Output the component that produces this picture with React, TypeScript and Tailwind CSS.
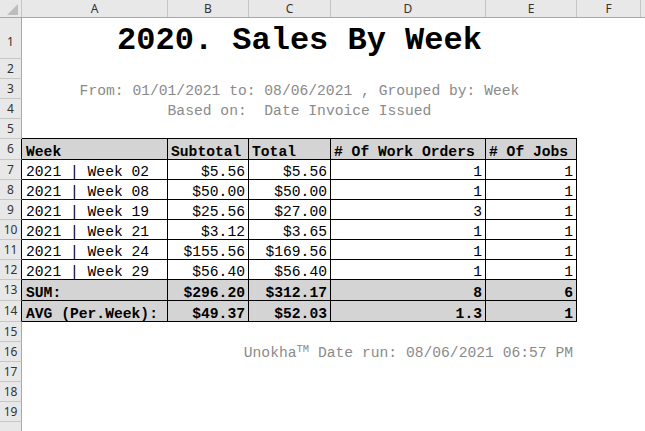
import React from "react";

const mono = "font-['Liberation_Mono','Courier_New',monospace]";
const hdrFont = "font-['Noto_Sans','Liberation_Sans',sans-serif]";

const rows = [
  { week: "2021 | Week 02", sub: "$5.56", total: "$5.56", wo: "1", jobs: "1" },
  { week: "2021 | Week 08", sub: "$50.00", total: "$50.00", wo: "1", jobs: "1" },
  { week: "2021 | Week 19", sub: "$25.56", total: "$27.00", wo: "3", jobs: "1" },
  { week: "2021 | Week 21", sub: "$3.12", total: "$3.65", wo: "1", jobs: "1" },
  { week: "2021 | Week 24", sub: "$155.56", total: "$169.56", wo: "1", jobs: "1" },
  { week: "2021 | Week 29", sub: "$56.40", total: "$56.40", wo: "1", jobs: "1" },
];

function Row({
  n,
  h,
  edge,
  low,
  children,
}: {
  n?: number;
  h: string;
  edge?: boolean;
  low?: boolean;
  children?: React.ReactNode;
}) {
  return (
    <div className={`flex ${h}`}>
      <div
        className={`w-[22px] shrink-0 flex justify-center border-b border-r border-b-[#c6c6c6] bg-[#e8e8e8] text-[12px] text-[#333] ${hdrFont} ${
          edge ? "border-r-black" : "border-r-[#a8a8a8]"
        } ${low ? "items-end pb-[7px]" : "items-center"}`}
      >
        {n}
      </div>
      {children}
    </div>
  );
}

const cell = `flex items-end leading-[14px] px-[3px] border-r border-b border-black whitespace-pre text-black text-[14.67px] ${mono}`;

function DataRow({
  n,
  h,
  vals,
  head,
  bold,
}: {
  n: number;
  h: string;
  vals: string[];
  head?: boolean;
  bold?: boolean;
}) {
  const fill = head || bold ? "bg-[#d4d4d4]" : "bg-white";
  const weight = head || bold ? "font-bold" : "";
  const al = head ? "justify-start" : "justify-end";
  return (
    <Row n={n} h={h} edge>
      <div className={`${cell} ${fill} ${weight} w-[146px] justify-start pl-[4px]`}>{vals[0]}</div>
      <div className={`${cell} ${fill} ${weight} w-[81px] ${al}`}>{vals[1]}</div>
      <div className={`${cell} ${fill} ${weight} w-[82px] ${al}`}>{vals[2]}</div>
      <div className={`${cell} ${fill} ${weight} w-[155px] ${al}`}>{vals[3]}</div>
      <div className={`${cell} ${fill} ${weight} w-[91px] ${al}`}>{vals[4]}</div>
      <div className="flex-1" />
    </Row>
  );
}

export default function App() {
  const cols = [
    { l: "A", w: "w-[146px]" },
    { l: "B", w: "w-[81px]" },
    { l: "C", w: "w-[82px]" },
    { l: "D", w: "w-[155px]" },
    { l: "E", w: "w-[91px]" },
    { l: "F", w: "w-[64px]" },
  ];
  const gray = `flex items-end justify-center w-[555px] border-b border-transparent leading-[14px] whitespace-pre text-[14.67px] text-[#8a8a8a] ${mono}`;

  return (
    <div className="w-[645px] h-[431px] overflow-hidden bg-white">
      <div className={`flex h-[18px] border-b border-[#a8a8a8] bg-[#e8e8e8] text-[12px] text-[#333] ${hdrFont}`}>
        <div className="w-[22px] shrink-0 border-r border-[#c6c6c6] flex items-end justify-end pr-[3px] pb-[2px]">
          <svg width="11" height="11" viewBox="0 0 11 11">
            <polygon points="11,0 11,11 0,11" fill="#bdbdbd" />
          </svg>
        </div>
        {cols.map((c) => (
          <div key={c.l} className={`${c.w} shrink-0 border-r border-[#c6c6c6] flex items-center justify-center`}>
            {c.l}
          </div>
        ))}
        <div className="flex-1" />
      </div>

      <Row n={1} h="h-[41px]" low>
        <div className={`flex items-end justify-center w-[555px] border-b border-transparent leading-[35px] whitespace-pre text-[32px] font-bold text-black ${mono}`}>
          2020. Sales By Week
        </div>
      </Row>
      <Row n={2} h="h-[20px]" />
      <Row n={3} h="h-[20px]">
        <div className={gray}>From: 01/01/2021 to: 08/06/2021 , Grouped by: Week</div>
      </Row>
      <Row n={4} h="h-[20px]">
        <div className={gray}>Based on:  Date Invoice Issued</div>
      </Row>
      <Row n={5} h="h-[20px]">
        <div className="w-[555px] border-b border-black" />
      </Row>

      <DataRow n={6} h="h-[21px]" head vals={["Week", "Subtotal", "Total", "# Of Work Orders", "# Of Jobs"]} />
      {rows.map((r, i) => (
        <DataRow key={r.week} n={7 + i} h="h-[20px]" vals={[r.week, r.sub, r.total, r.wo, r.jobs]} />
      ))}
      <DataRow n={13} h="h-[21px]" bold vals={["SUM:", "$296.20", "$312.17", "8", "6"]} />
      <DataRow n={14} h="h-[21px]" bold vals={["AVG (Per.Week):", "$49.37", "$52.03", "1.3", "1"]} />

      <Row n={15} h="h-[20px]" />
      <Row n={16} h="h-[20px]">
        <div className={`${gray} justify-end pr-[4px] pb-[1px]`}>
          Unokha<span className="text-[10.5px] relative -top-[4px]">TM</span> Date run: 08/06/2021 06:57 PM
        </div>
      </Row>
      <Row n={17} h="h-[20px]" />
      <Row n={18} h="h-[20px]" />
      <Row n={19} h="h-[20px]" />
      <Row h="h-[20px]" />
    </div>
  );
}
